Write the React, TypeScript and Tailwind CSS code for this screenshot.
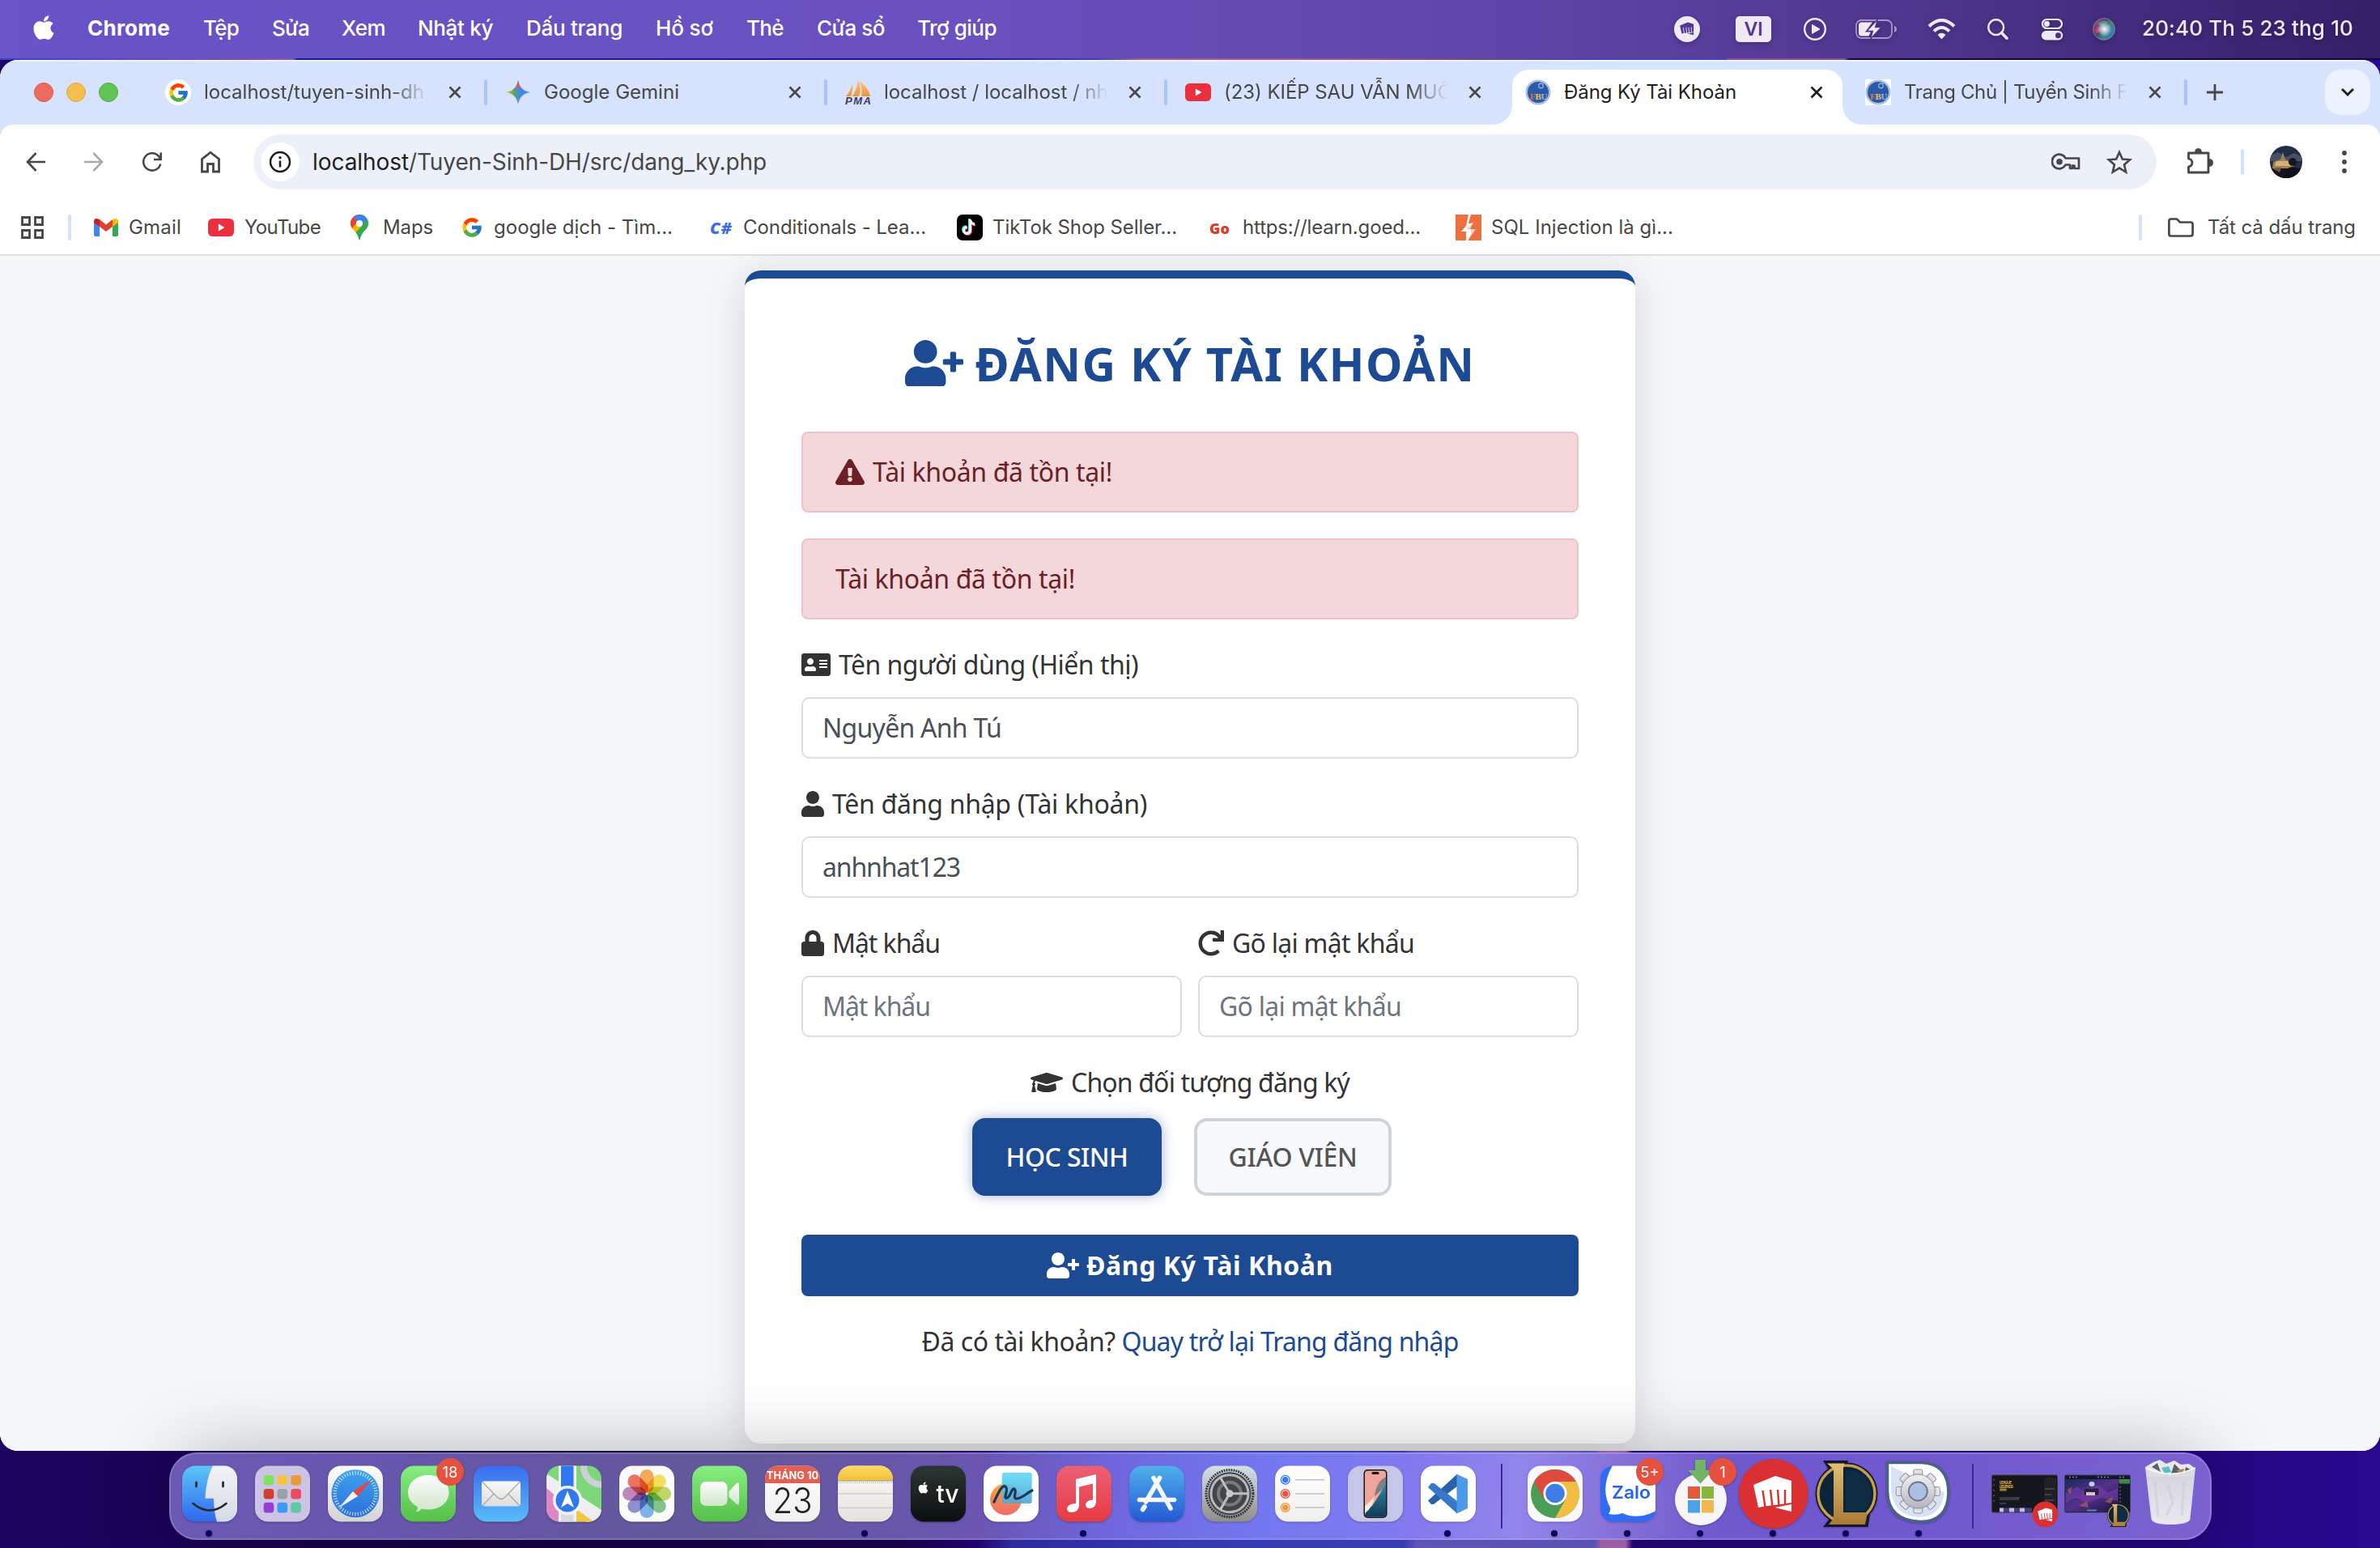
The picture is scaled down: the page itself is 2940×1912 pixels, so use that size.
import { useLayoutEffect, useRef, useState } from "react";
import type { ReactNode } from "react";
import {
  FaAddressCard,
  FaApple,
  FaExclamationTriangle,
  FaGraduationCap,
  FaLock,
  FaRedo,
  FaUser,
  FaUserPlus,
} from "react-icons/fa";
import { FcGoogle } from "react-icons/fc";

/* Text run whose tracking is adjusted so that it fills exactly `w` pixels. */
function Fit({ w, children, className = "" }: { w: number; children: string; className?: string }) {
  const ref = useRef<HTMLSpanElement>(null);
  const [spacing, setSpacing] = useState(0);
  useLayoutEffect(() => {
    if (ref.current) {
      const natural = ref.current.getBoundingClientRect().width;
      setSpacing((w - natural) / children.length);
    }
  }, [w, children]);
  return (
    <span ref={ref} className={`inline-block whitespace-pre ${className}`} style={{ letterSpacing: `${spacing}px` }}>
      {children}
    </span>
  );
}

/* ---------- macOS menu bar ---------- */

const menus = [
  { label: "Chrome", cell: "w-[143px] font-bold", w: 102 },
  { label: "Tệp", cell: "w-[85px] font-medium", w: 44 },
  { label: "Sửa", cell: "w-[86px] font-medium", w: 46 },
  { label: "Xem", cell: "w-[94px] font-medium", w: 54 },
  { label: "Nhật ký", cell: "w-[134px] font-medium", w: 93 },
  { label: "Dấu trang", cell: "w-[160px] font-medium", w: 119 },
  { label: "Hồ sơ", cell: "w-[112px] font-medium", w: 71 },
  { label: "Thẻ", cell: "w-[87px] font-medium", w: 46 },
  { label: "Cửa sổ", cell: "w-[124px] font-medium", w: 84 },
  { label: "Trợ giúp", cell: "w-[120px] font-medium", w: 98 },
];

function Fist({ fill, slit }: { fill: string; slit: string }) {
  return (
    <g>
      <path d="M2 11 L29 0 L49 6 L49 33 L42 34 L36 35 L28 36 L19 37 L8 39 Z" fill={fill} />
      <path d="M28.5 39 L49 35 L49 44 Z" fill={fill} />
      <path d="M13.5 18 L16.5 39 M23 17 L25.5 38 M32 17 L33.5 37 M41 17 L41 35" stroke={slit} strokeWidth="2.4" />
    </g>
  );
}

function MenuBar() {
  return (
    <div className="flex h-[72px] items-center bg-[linear-gradient(90deg,#6853c7_0%,#6951bf_40%,#5f43a5_66%,#4b3287_84%,#33206a_100%)] text-[26px] text-white">
      <FaApple className="mb-1 ml-[37px] h-[34px] w-[34px]" />
      <div className="ml-[37px] flex pb-[3px]">
        {menus.map((m) => (
          <div key={m.label} className={m.cell}>
            <Fit w={m.w}>{m.label}</Fit>
          </div>
        ))}
      </div>
      <div className="ml-auto flex items-center text-[#edeaf4] [filter:drop-shadow(0_2px_3px_rgba(0,0,0,.25))]">
        <svg className="h-8 w-8" viewBox="0 0 32 32">
          <circle cx="16" cy="16" r="16" fill="#edeaf4" />
          <g transform="translate(6.5 7.5) scale(.36)">
            <Fist fill="#54378f" slit="#edeaf4" />
          </g>
        </svg>
        <div className="ml-11 flex h-8 w-11 items-center justify-center rounded-[5px] bg-[#edeaf4] text-[23px] font-semibold text-[#54378f]">VI</div>
        <svg className="ml-10 h-7 w-7" viewBox="0 0 28 28" fill="none">
          <circle cx="14" cy="14" r="12.8" stroke="currentColor" strokeWidth="2.4" />
          <path d="M10.5 8.5 L20 14 L10.5 19.500Z" fill="currentColor" stroke="currentColor" strokeLinejoin="round" />
        </svg>
        <svg className="ml-9 h-[26px] w-[52px]" viewBox="0 0 52 26" fill="none">
          <rect x="1" y="2" width="44" height="22" rx="6.500" stroke="#a596c9" strokeWidth="1.8" />
          <path d="M48 9 Q51 10 51 13 Q51 16 48 17Z" fill="#a596c9" />
          <path d="M8 4.500 H21 L12 16.500 H19 L16.500 21.500 H8 Q4 21.500 4 18 V8 Q4 4.500 8 4.500Z" fill="currentColor" />
          <path d="M27.500 1 L14 15.300 H21.500 L18.500 25 L32 10.600 H24.500Z" fill="currentColor" stroke="#4f348c" strokeWidth="1.200" />
        </svg>
        <svg className="ml-[37px] h-[26px] w-[35px]" viewBox="0 0 35 26" fill="none" stroke="currentColor">
          <path d="M2 9.500 Q17.500 -5.500 33 9.500" strokeWidth="4" />
          <path d="M8 15.500 Q17.500 6.500 27 15.500" strokeWidth="4" />
          <path d="M12.500 20 Q17.500 15.500 22.500 20 L17.500 25.500Z" fill="currentColor" stroke="none" />
        </svg>
        <svg className="ml-[39px] h-[26px] w-[26px]" viewBox="0 0 26 26" fill="none" stroke="currentColor">
          <circle cx="10.700" cy="10.700" r="9.400" strokeWidth="2.400" />
          <path d="M17.500 17.500 L24 24.200" strokeWidth="3.600" strokeLinecap="round" />
        </svg>
        <svg className="ml-10 h-7 w-7" viewBox="0 0 28 28">
          <rect x="2" y="2" width="24" height="11" rx="5.500" fill="none" stroke="currentColor" strokeWidth="2.200" />
          <circle cx="7.500" cy="7.500" r="3.400" fill="currentColor" />
          <rect x="0.800" y="16" width="26.400" height="11.500" rx="5.700" fill="currentColor" />
          <circle cx="21.500" cy="21.700" r="3.500" fill="#4a2f85" />
        </svg>
        <svg className="ml-9 h-7 w-7" viewBox="0 0 28 28">
          <defs>
            <radialGradient id="siriCore"><stop offset="0" stopColor="#fff" /><stop offset=".35" stopColor="#d7e6f5" stopOpacity=".8" /><stop offset="1" stopColor="#fff" stopOpacity="0" /></radialGradient>
            <linearGradient id="siriRing" x1="0" x2="1" y1="0.200" y2="0.800"><stop offset="0" stopColor="#b03a75" /><stop offset=".4" stopColor="#4a4a70" /><stop offset=".6" stopColor="#3c8a80" /><stop offset="1" stopColor="#3a70c8" /></linearGradient>
          </defs>
          <circle cx="14" cy="14" r="13.500" fill="url(#siriRing)" stroke="#8c86a5" strokeWidth=".8" />
          <path d="M6 7 Q12 1 20 5 Q14 8 13 13Z" fill="#4fa58c" opacity=".7" />
          <path d="M3 15 Q7 9 14 14 Q8 18 5 19Z" fill="#e04a70" opacity=".7" />
          <circle cx="14.500" cy="14" r="9" fill="url(#siriCore)" />
        </svg>
        <div className="ml-[33px] mr-[33px] pb-[3px] font-medium">
          <Fit w={261}>20:40 Th 5 23 thg 10</Fit>
        </div>
      </div>
    </div>
  );
}

/* ---------- Site icons ---------- */

function YouTube() {
  return (
    <svg className="h-8 w-8" viewBox="0 0 32 32">
      <rect x="0" y="5" width="32" height="22" rx="5.500" fill="#ec2f3e" />
      <path d="M12.800 11.500 L20.500 16 L12.800 20.500Z" fill="#fff" />
    </svg>
  );
}

function Fbu({ boxed }: { boxed?: boolean }) {
  return (
    <svg className="h-8 w-8" viewBox="0 0 32 32">
      {boxed && <rect width="32" height="32" fill="#fff" />}
      <circle cx="16" cy="16" r="15.500" fill="#a9c0e0" />
      <circle cx="16" cy="16" r="13" fill="#2b5ba8" />
      <circle cx="19.500" cy="8" r="2.800" fill="none" stroke="#9bb8e0" strokeWidth="1.200" />
      <text x="6" y="25" fontFamily="Liberation Serif" fontWeight="700" fontSize="11" fill="#e8694a">F</text>
      <text x="12.500" y="25" fontFamily="Liberation Serif" fontWeight="700" fontSize="11" fill="#efc45a">B</text>
      <text x="19.500" y="25" fontFamily="Liberation Serif" fontWeight="700" fontSize="11" fill="#9fb4d6">U</text>
    </svg>
  );
}

function Gemini() {
  return (
    <svg className="h-8 w-8" viewBox="0 0 32 32">
      <defs>
        <linearGradient id="gemA" x1="0" x2="1" y1=".5" y2=".5"><stop offset="0" stopColor="#f2c32e" /><stop offset=".35" stopColor="#57a66a" /><stop offset=".6" stopColor="#4285f4" /><stop offset="1" stopColor="#4f8ff7" /></linearGradient>
        <linearGradient id="gemB" x1="0" x2="0" y1="0" y2="1"><stop offset="0" stopColor="#ef4a45" /><stop offset=".25" stopColor="#e2565a" stopOpacity=".85" /><stop offset=".45" stopColor="#4285f4" stopOpacity="0" /></linearGradient>
      </defs>
      <path id="gemStar" d="M16 1 Q18 14 31 16 Q18 18 16 31 Q14 18 1 16 Q14 14 16 1Z" fill="url(#gemA)" />
      <path d="M16 1 Q18 14 31 16 Q18 18 16 31 Q14 18 1 16 Q14 14 16 1Z" fill="url(#gemB)" />
    </svg>
  );
}

function Pma() {
  return (
    <svg className="h-8 w-8 overflow-visible" viewBox="0 0 32 32">
      <defs><linearGradient id="pmaSail" x1="0" x2="0" y1="0" y2="1"><stop offset="0" stopColor="#f9c98a" /><stop offset="1" stopColor="#ef9330" /></linearGradient></defs>
      <path d="M9 5 Q10 14 7 21 H1 Q7 14 9 5Z M16 0 Q21 12 17 21 H9 Q15 12 16 0Z M18 3 Q29 10 31 21 H20 Q22 12 18 3Z" fill="url(#pmaSail)" />
      <text x="0" y="31" fontFamily="Liberation Sans" fontStyle="italic" fontWeight="700" fontSize="13" textLength="32" fill="#3c3a5c">PMA</text>
    </svg>
  );
}

function Gmail() {
  return (
    <svg className="h-[22px] w-[30px]" viewBox="0 0 30 22">
      <path d="M0 4 V20 Q0 22 2 22 H7 V10Z" fill="#4285f4" />
      <path d="M30 4 V20 Q30 22 28 22 H23 V10Z" fill="#34a853" />
      <path d="M7 1 L15 7.500 L23 1 V10 L15 16 L7 10Z" fill="#e2402f" />
      <path d="M0 4 Q0 0 3 0 Q5 0 7 1.200 V10 L0 5Z" fill="#c5221f" />
      <path d="M30 4 Q30 0 27 0 Q25 0 23 1.200 V10 L30 5Z" fill="#fbbc04" />
    </svg>
  );
}

function MapsPin() {
  return (
    <svg className="h-8 w-[22px]" viewBox="0 0 22 32">
      <defs><clipPath id="pinClip"><path d="M11 0 A11 11 0 0 1 22 11 Q22 16 17 20 Q13 24 11 32 Q9 24 5 20 Q0 16 0 11 A11 11 0 0 1 11 0Z" /></clipPath></defs>
      <g clipPath="url(#pinClip)">
        <rect width="22" height="32" fill="#34a853" />
        <path d="M0 8 L4 4 L18 20 L8 24 L0 18Z" fill="#fbbc04" />
        <path d="M0 20 L14 4 L9 0 L0 4Z" fill="#ea4335" />
        <path d="M4 2 L22 -2 V6 L11 14Z" fill="#3f7ff0" />
        <path d="M22 5 L12 16 L4 24 L12 36 L24 24Z" fill="#34a853" />
        <path d="M0 19 L8 10 L13 15 L4 24Z" fill="#fbbc04" />
      </g>
      <circle cx="11" cy="11" r="4" fill="#fff" />
    </svg>
  );
}

/* ---------- Browser chrome ---------- */

function Cross({ active }: { active?: boolean }) {
  return (
    <svg className={active ? "h-4 w-4 text-[#1f1f1f]" : "h-4 w-4 text-[#474747]"} viewBox="0 0 16 16">
      <path d="M1.500 1.500 L14.500 14.500 M14.500 1.500 L1.500 14.500" stroke="currentColor" strokeWidth="2.600" />
    </svg>
  );
}

type TabData = { title: string; w: number; icon: ReactNode; active?: boolean; fade?: boolean; sep?: boolean };

const tabs: TabData[] = [
  { title: "localhost/tuyen-sinh-dh", w: 272, fade: true, sep: true, icon: <div className="flex h-8 w-8 items-center justify-center rounded-full bg-white"><FcGoogle className="h-[27px] w-[27px]" /></div> },
  { title: "Google Gemini", w: 167, sep: true, icon: <Gemini /> },
  { title: "localhost / localhost / nha", w: 290, fade: true, sep: true, icon: <Pma /> },
  { title: "(23) KIẾP SAU VẪN MUỐN", w: 300, fade: true, icon: <YouTube /> },
  { title: "Đăng Ký Tài Khoản", w: 213, active: true, icon: <Fbu /> },
  { title: "Trang Chủ | Tuyển Sinh FB", w: 292, fade: true, sep: true, icon: <Fbu boxed /> },
];

function Tab({ t }: { t: TabData }) {
  const body = (
    <>
      {t.icon}
      <div className={t.fade ? "ml-4 w-[280px] overflow-hidden [mask-image:linear-gradient(90deg,#000_82%,transparent_99%)]" : "ml-4 w-[280px] overflow-hidden"}>
        <Fit w={t.w}>{t.title}</Fit>
      </div>
      <div className="ml-auto"><Cross active={t.active} /></div>
    </>
  );
  if (t.active) {
    return (
      <div className="relative mx-[6px] flex h-[68px] w-[408px] items-center rounded-t-[20px] bg-white pb-3 pl-4 pr-6 text-[#1f1f1f]">
        <svg className="absolute -left-6 bottom-0 h-6 w-6" viewBox="0 0 24 24"><path d="M24 0 V24 H0 A24 24 0 0 0 24 0Z" fill="#fff" /></svg>
        {body}
        <svg className="absolute -right-6 bottom-0 h-6 w-6" viewBox="0 0 24 24"><path d="M0 0 V24 H24 A24 24 0 0 1 0 0Z" fill="#fff" /></svg>
      </div>
    );
  }
  return (
    <div className="flex h-[68px] w-[420px] items-center pb-3 pl-[22px] text-[#474747]">
      {body}
      <div className={t.sep ? "ml-7 h-8 w-1 rounded-full bg-[#a8c4f8]" : "ml-7 h-8 w-1"} />
    </div>
  );
}

function TabStrip() {
  return (
    <div className="flex h-20 items-start border-t-2 border-[#eef3fd] bg-[#d7e2fc] pt-[10px] text-[24px]">
      <div className="flex h-14 w-[182px] items-center gap-4 pl-[42px]">
        <div className="h-6 w-6 rounded-full border border-[#d8594d] bg-[#ec6a5e]" />
        <div className="h-6 w-6 rounded-full border border-[#dda73c] bg-[#f5bf4f]" />
        <div className="h-6 w-6 rounded-full border border-[#50ad3f] bg-[#61c554]" />
      </div>
      {tabs.map((t) => <Tab key={t.title} t={t} />)}
      <svg className="ml-[24px] mt-[18px] h-5 w-5" viewBox="0 0 20 20"><path d="M10 0 V20 M0 10 H20" stroke="#474747" strokeWidth="2.800" /></svg>
      <div className="ml-auto mr-3 flex h-14 w-14 items-center justify-center rounded-[20px] bg-[#edf3fe]">
        <svg className="h-4 w-4" viewBox="0 0 16 16"><path d="M1 4 L8 11 L15 4" fill="none" stroke="#1f1f1f" strokeWidth="3" /></svg>
      </div>
    </div>
  );
}

function Toolbar() {
  return (
    <div className="flex h-[92px] items-center text-[#474747]">
      <svg className="ml-8 h-6 w-6" viewBox="0 0 24 24" fill="none" stroke="#474747" strokeWidth="2.600"><path d="M12.500 1 L2 12 L12.500 23 M2 12 H24" /></svg>
      <svg className="ml-12 h-6 w-6" viewBox="0 0 24 24" fill="none" stroke="#a9a9a9" strokeWidth="2.600"><path d="M11.500 1 L22 12 L11.500 23 M22 12 H0" /></svg>
      <svg className="ml-12 h-6 w-6" viewBox="0 0 24 24" fill="none" stroke="#474747" strokeWidth="2.600"><path d="M22.300 14.500 A10.700 10.700 0 1 1 20.500 5.500 L22 8.500 M22.700 0.500 V9 H14" /></svg>
      <svg className="ml-12 h-7 w-6" viewBox="0 0 24 28" fill="none" stroke="#474747" strokeWidth="2.800"><path d="M1.500 10.500 L12 2.200 L22.500 10.500 V26 H15.500 V16.500 H8.500 V26 H1.500Z" /></svg>
      <div className="ml-[41px] flex h-[68px] w-[2351px] items-center rounded-full bg-[#ecf1f9] pl-[9px] text-[28px]">
        <div className="flex h-12 w-12 items-center justify-center rounded-full bg-white">
          <svg className="h-7 w-7" viewBox="0 0 28 28" fill="none"><circle cx="14" cy="14" r="12" stroke="#1f1f1f" strokeWidth="2.500" /><path d="M14 12.500 V20.500" stroke="#1f1f1f" strokeWidth="2.600" /><circle cx="14" cy="8.700" r="1.700" fill="#1f1f1f" /></svg>
        </div>
        <div className="ml-4 flex">
          <Fit w={119} className="text-[#1f1f1f]">localhost</Fit>
          <Fit w={442}>/Tuyen-Sinh-DH/src/dang_ky.php</Fit>
        </div>
        <svg className="ml-auto h-6 w-9" viewBox="0 0 36 24" fill="none" stroke="#474747" strokeWidth="2.700">
          <path d="M17.500 7.500 A8.800 8.800 0 1 0 17.500 15.500 H23 V20 H26 V16.500 H28.500 V20 H34 V7.500Z" strokeLinejoin="round" />
          <circle cx="10" cy="11.700" r="3.800" fill="#474747" stroke="none" />
        </svg>
        <svg className="ml-8 mr-[30px] h-[30px] w-[32px]" viewBox="0 0 32 30" fill="none" stroke="#474747" strokeWidth="2.600"><path d="M16 3 L19.800 11.600 L29 12.300 L22 18.400 L24.200 27.500 L16 22.600 L7.800 27.500 L10 18.400 L3 12.300 L12.200 11.600Z" /></svg>
      </div>
      <svg className="mb-1 ml-9 h-9 w-9" viewBox="0 0 36 36" fill="none" stroke="#474747" strokeWidth="2.800">
        <path d="M3.500 9 H28 V33 H3.500 V26 Q8 25 8 21 Q8 17 3.500 16Z" strokeLinejoin="round" />
        <path d="M11 9 Q11 3 15.500 3 Q20 3 20 9Z M28 16 Q34 16 34 21 Q34 26 28 26Z" fill="#474747" stroke="none" />
      </svg>
      <div className="ml-[32px] h-8 w-1 rounded-full bg-[#d3e1fb]" />
      <svg className="ml-8 h-10 w-10" viewBox="0 0 40 40">
        <defs><clipPath id="avatarClip"><circle cx="20" cy="20" r="20" /></clipPath></defs>
        <g clipPath="url(#avatarClip)">
          <rect width="40" height="40" fill="#222c44" />
          <path d="M0 12 L10 8 L20 14 L30 9 L40 14 V19 H0Z" fill="#465068" />
          <path d="M4 20 L13 17 L16 8 L19 17 L28 21 L30 28 H3Z" fill="#a38156" />
          <path d="M8 19 L22 19 L26 25 H6Z" fill="#d5b27a" />
          <rect y="28" width="40" height="12" fill="#15131c" />
          <circle cx="28" cy="20" r="5" fill="#17181f" />
          <path d="M16 40 Q18 27 28 26 Q38 27 40 40Z" fill="#10121b" />
          <path d="M3 28 L14 27 L12 33 Z" fill="#6d5844" />
        </g>
      </svg>
      <svg className="ml-[49px] h-7 w-[6px]" viewBox="0 0 6 28" fill="#474747"><circle cx="3" cy="3" r="2.900" /><circle cx="3" cy="14" r="2.900" /><circle cx="3" cy="25" r="2.900" /></svg>
    </div>
  );
}

const bookmarks = [
  { label: "Gmail", w: 65, cell: "ml-[28px] w-[141px]", box: "w-[43px]", icon: <Gmail /> },
  { label: "YouTube", w: 94, cell: "w-[176px]", box: "w-[45px]", icon: <YouTube /> },
  { label: "Maps", w: 62, cell: "w-[138px]", box: "w-[40px]", icon: <MapsPin /> },
  { label: "google dịch - Tìm...", w: 221, cell: "w-[306px]", box: "w-[39px]", icon: <FcGoogle className="-ml-[2px] h-[28px] w-[28px]" /> },
  { label: "Conditionals - Lea...", w: 226, cell: "w-[305px]", box: "w-[41px]", icon: <span className="font-['Open_Sans'] text-[20px] font-extrabold italic text-[#3a6cf0]"><Fit w={28}>C#</Fit></span> },
  { label: "TikTok Shop Seller...", w: 228, cell: "w-[312px]", box: "w-[44px]", icon: (
    <svg className="h-8 w-8" viewBox="0 0 32 32" fill="none" strokeWidth="3">
      <rect width="32" height="32" rx="7" fill="#000" />
      <path d="M16.500 6 V19.500 A4 4 0 1 1 12.500 15.500 M16.500 7 Q17.500 11.500 22 12" stroke="#25f4ee" transform="translate(-1 -1)" />
      <path d="M16.500 6 V19.500 A4 4 0 1 1 12.500 15.500 M16.500 7 Q17.500 11.500 22 12" stroke="#fe2c55" transform="translate(1 1)" />
      <path d="M16.500 6 V19.500 A4 4 0 1 1 12.500 15.500 M16.500 7 Q17.500 11.500 22 12" stroke="#fff" />
    </svg>
  ) },
  { label: "https://learn.goed...", w: 220, cell: "w-[304px]", box: "w-[41px]", icon: <span className="font-['Open_Sans'] text-[18px] font-extrabold text-[#dd3b2a]"><Fit w={25}>Go</Fit></span> },
  { label: "SQL Injection là gì...", w: 225, cell: "w-[300px]", box: "w-[44px]", icon: (
    <svg className="h-8 w-8" viewBox="0 0 32 32">
      <rect width="32" height="32" fill="#ee7040" />
      <path d="M16 0 H19 L16 11 H22 L14 16 V18 H19 V24 L15.500 32 H13 V21 H7 L13 14Z" fill="#fff" />
      <path d="M13 15 L22 9 L18 18 H25 L15 32 L17 22 H13Z" fill="#fff" opacity=".7" />
    </svg>
  ) },
];

function BookmarkBar() {
  return (
    <div className="flex h-[68px] items-center border-b-2 border-[#dfe3df] pl-[26px] text-[24px] text-[#474747]">
      <svg className="h-7 w-7" viewBox="0 0 28 28" fill="none" stroke="#474747" strokeWidth="2.800"><path d="M1.500 1.500 H10.500 V10.500 H1.500Z M17.500 1.500 H26.500 V10.500 H17.500Z M1.500 17.500 H10.500 V26.500 H1.500Z M17.500 17.500 H26.500 V26.500 H17.500Z" /></svg>
      <div className="ml-[30px] h-8 w-1 rounded-full bg-[#d3e1fb]" />
      {bookmarks.map((b) => (
        <div key={b.label} className={`flex items-center ${b.cell}`}>
          <div className={b.box}>{b.icon}</div>
          <Fit w={b.w}>{b.label}</Fit>
        </div>
      ))}
      <div className="ml-auto h-8 w-1 rounded-full bg-[#d3e1fb]" />
      <svg className="ml-8 h-6 w-8" viewBox="0 0 32 24" fill="none" stroke="#474747" strokeWidth="2.700"><path d="M1.400 20 V4 Q1.400 1.500 4 1.500 H11 L15 5.500 H28 Q30.600 5.500 30.600 8 V20 Q30.600 22.500 28 22.500 H4 Q1.400 22.500 1.400 20Z" /></svg>
      <div className="ml-[17px] mr-[30px]"><Fit w={183}>Tất cả dấu trang</Fit></div>
    </div>
  );
}

/* ---------- Registration form ---------- */

function Alert({ icon }: { icon?: boolean }) {
  return (
    <div className="mb-8 flex h-[100px] items-center rounded-[8px] border-2 border-[#efc2c9] bg-[#f3d7da] pl-10 text-[#6b2026]">
      {icon && <FaExclamationTriangle className="mr-[10px] h-8 w-9" />}
      <Fit w={296}>Tài khoản đã tồn tại!</Fit>
    </div>
  );
}

function Field({ icon, label, lw, text, tw, muted }: { icon: ReactNode; label: string; lw: number; text: string; tw: number; muted?: boolean }) {
  return (
    <div className="mb-8 flex-1">
      <div className="mb-4 flex h-12 items-center">
        {icon}
        <Fit w={lw} className="ml-[10px]">{label}</Fit>
      </div>
      <div className={muted ? "flex h-[76px] items-center rounded-[10px] border-2 border-[#dddddd] bg-white pl-6 text-[#6c757d]" : "flex h-[76px] items-center rounded-[10px] border-2 border-[#dddddd] bg-white pl-6 text-[#495057]"}>
        <Fit w={tw}>{text}</Fit>
      </div>
    </div>
  );
}

function FormCard() {
  return (
    <div className="mx-auto mt-[18px] h-[1449px] w-[1100px] rounded-[20px] border-t-[10px] border-[#1d4b93] bg-white px-[70px] pt-[70px] font-['Noto_Sans',sans-serif] text-[32px] leading-[48px] text-[#333] shadow-[0_8px_50px_rgba(0,0,0,0.13)]">
      <div className="mb-[50px] flex h-[69px] items-center justify-center text-[57.600px] font-bold leading-[69px] text-[#1d4b93]">
        <FaUserPlus className="mr-[15px] h-[1em] w-[1.25em]" />
        <Fit w={618}>ĐĂNG KÝ TÀI KHOẢN</Fit>
      </div>
      <Alert icon />
      <Alert />
      <Field icon={<FaAddressCard className="h-8 w-9" />} label="Tên người dùng (Hiển thị)" lw={370} text="Nguyễn Anh Tú" tw={221} />
      <Field icon={<FaUser className="h-8 w-7" />} label="Tên đăng nhập (Tài khoản)" lw={389} text="anhnhat123" tw={170} />
      <div className="flex gap-5">
        <Field icon={<FaLock className="h-8 w-7" />} label="Mật khẩu" lw={133} text="Mật khẩu" tw={133} muted />
        <Field icon={<FaRedo className="h-8 w-8" />} label="Gõ lại mật khẩu" lw={225} text="Gõ lại mật khẩu" tw={225} muted />
      </div>
      <div className="mb-5 flex h-12 items-center justify-center">
        <FaGraduationCap className="mr-[10px] h-8 w-10" />
        <Fit w={344}>Chọn đối tượng đăng ký</Fit>
      </div>
      <div className="ml-[211px] flex gap-10">
        <div className="flex h-24 w-[234px] items-center justify-center rounded-2xl bg-[#1d4b93] font-medium text-white shadow-[0_0_16px_rgba(29,75,147,0.4)]">
          <Fit w={151}>HỌC SINH</Fit>
        </div>
        <div className="flex h-24 w-[244px] items-center justify-center rounded-2xl border-4 border-[#ced4da] bg-[#f8f9fc] font-medium text-[#555]">
          <Fit w={159}>GIÁO VIÊN</Fit>
        </div>
      </div>
      <div className="mt-12 flex h-[76px] items-center justify-center rounded-[8px] bg-[#1d4b93] font-bold text-white">
        <FaUserPlus className="mr-[9px] h-8 w-10" />
        <Fit w={305}>Đăng Ký Tài Khoản</Fit>
      </div>
      <div className="mt-8 flex justify-center">
        <Fit w={247}>Đã có tài khoản? </Fit>
        <Fit w={416} className="text-[#1d4b93]">Quay trở lại Trang đăng nhập</Fit>
      </div>
    </div>
  );
}

/* ---------- Dock ---------- */

function Tile({ fill }: { fill: string }) {
  return <rect x="11" y="16.500" width="68" height="69" rx="16" fill={fill} />;
}

function Grad({ id, from, to }: { id: string; from: string; to: string }) {
  return <linearGradient id={id} x1="0" y1="0" x2="0" y2="1"><stop offset="0" stopColor={from} /><stop offset="1" stopColor={to} /></linearGradient>;
}

function Badge({ text }: { text: string }) {
  return (
    <g>
      <circle cx="72" cy="24" r="17" fill="#e5503f" />
      <text x="72" y="30.500" textAnchor="middle" fontFamily="Inter" fontSize="18.500" fill="#fff">{text}</text>
    </g>
  );
}

function LolEmblem() {
  return (
    <g>
      <circle cx="45" cy="51" r="38.500" fill="#15172e" />
      <path d="M16 10 H47 L44.500 18 V70 H75 L71.500 92 H16 L23 83 V21Z" fill="#15172e" />
      <circle cx="45" cy="51" r="35" fill="#0c2438" stroke="#c89f4d" strokeWidth="3.400" />
      <path d="M44 22 A29 29 0 0 1 66 72 H44Z" fill="#0e2c42" />
      <path d="M21 13.500 H42.500 L41 19 V74 H71 L68 89 H23 L29 81 V21Z" fill="url(#gold)" />
    </g>
  );
}

function GearShape({ teeth, r, tooth, fill, stroke }: { teeth: number; r: number; tooth: number; fill: string; stroke: string }) {
  const angles = Array.from({ length: teeth }, (_, i) => (360 / teeth) * i);
  return (
    <g fill={fill} stroke={stroke} strokeWidth="1">
      {angles.map((a) => <rect key={a} x={-tooth / 2} y={-r - 6} width={tooth} height="12" rx="2" transform={`rotate(${a})`} />)}
      <circle r={r} />
    </g>
  );
}

const ticks = Array.from({ length: 48 }, (_, i) => i * 7.5);
const petals = [
  [0, "#f3a03c"], [45, "#f5dd3c"], [90, "#b9d24f"], [135, "#6dbd7c"],
  [180, "#66a8e8"], [225, "#7f7cc8"], [270, "#b875b5"], [315, "#ee5b4a"],
] as const;
const pads = [
  ["#7ee35f", "#f5c542", "#eb9a3a"], ["#d23b2f", "#9aa0a6", "#ec4a63"], ["#9440d6", "#3c9af5", "#5fc9a6"],
];

const dockApps: { name: string; dot?: boolean; art: ReactNode }[] = [
  { name: "Finder", dot: true, art: (
    <>
      <defs><Grad id="finder" from="#5cc6f8" to="#3068ee" /><Grad id="finderR" from="#f3f4f6" to="#d4dae6" /><clipPath id="tileClip"><rect x="11" y="16.500" width="68" height="69" rx="16" /></clipPath></defs>
      <Tile fill="url(#finder)" />
      <path clipPath="url(#tileClip)" d="M49 16 Q40 35 39.500 56.700 H50 Q50 72 54 86 H80 V16Z" fill="url(#finderR)" />
      <path d="M28.500 37 V42 M61.500 37 V42" stroke="#2a2f3a" strokeWidth="2.800" strokeLinecap="round" />
      <path d="M24.500 63 Q45 80 65.500 63" fill="none" stroke="#22262e" strokeWidth="2.600" strokeLinecap="round" />
    </>
  ) },
  { name: "Launchpad", art: (
    <>
      <Tile fill="#cbc5e3" />
      {pads.map((row, y) => row.map((c, x) => <rect key={c} x={21.700 + x * 16.800} y={28 + y * 16.900} width="12.600" height="12.600" rx="3.500" fill={c} />))}
    </>
  ) },
  { name: "Safari", art: (
    <>
      <defs><Grad id="safT" from="#fdfdfd" to="#d3d3d5" /><Grad id="saf" from="#3fa3ee" to="#2a6fdc" /></defs>
      <Tile fill="url(#safT)" />
      <circle cx="45" cy="50.700" r="29.500" fill="url(#saf)" />
      <g stroke="#fff" strokeWidth="1" opacity=".85">{ticks.map((a) => <path key={a} d="M45 23 V27.500" transform={`rotate(${a} 45 50.700)`} />)}</g>
      <path d="M66 33 L42 48 L48 54Z" fill="#e8453c" /><path d="M24.500 68.500 L42 48 L48 54Z" fill="#f4f4f6" />
    </>
  ) },
  { name: "Messages", art: (
    <>
      <defs><Grad id="green" from="#87ee82" to="#55bf48" /><Grad id="bub" from="#fdfdfd" to="#cfe6c8" /></defs>
      <Tile fill="url(#green)" />
      <path d="M45 28 C60 28 70.500 37.500 70.500 49.500 S60 70.500 45 70.500 Q41 70.500 37 69.500 Q34 73 29.500 73.500 Q32.500 70 31.500 67 Q20 61 20 49.500 C20 37.500 30 28 45 28Z" fill="url(#bub)" />
      <Badge text="18" />
    </>
  ) },
  { name: "Mail", art: (
    <>
      <defs><Grad id="mail" from="#3a6cee" to="#57bdf8" /><Grad id="env" from="#fafafa" to="#dcdcde" /></defs>
      <Tile fill="url(#mail)" />
      <rect x="21" y="35.500" width="48" height="31" rx="3" fill="url(#env)" />
      <path d="M22 66 L36 51 M68 66 L54 51 M22 36.500 L40 55 Q45 60 50 55 L68 36.500" fill="none" stroke="#a9a9ad" strokeWidth="1.300" />
    </>
  ) },
  { name: "Maps", art: (
    <g clipPath="url(#tileClip)">
      <rect x="11" y="16" width="68" height="70" fill="#7ed67a" />
      <path d="M11 42 L27 52 V86 H11Z" fill="#df86c6" />
      <path d="M11 26 L80 72 V86 H60 L11 44Z" fill="#ededf2" />
      <path d="M48 86 V70 L70 86Z" fill="#f3c545" />
      <circle cx="80" cy="17" r="23" fill="none" stroke="#cfcfd8" strokeWidth="8" />
      <rect x="26" y="16" width="22" height="70" fill="#f3f3f7" />
      <rect x="29" y="16" width="15.500" height="40" fill="#2f78ee" />
      <rect x="29" y="70" width="15.500" height="16" fill="#d9d9e0" />
      <circle cx="37" cy="59" r="18" fill="#f4f4f8" /><circle cx="37" cy="59" r="14.500" fill="#2f78ee" />
      <path d="M37 47.500 L45 68 L37 63 L29 68Z" fill="#fff" />
    </g>
  ) },
  { name: "Photos", art: (
    <>
      <Tile fill="#fbfbfc" />
      {petals.map(([a, c]) => <rect key={a} x="36.500" y="21" width="17" height="29" rx="8.500" fill={c} opacity=".85" className="mix-blend-multiply" transform={`rotate(${a} 45 51)`} />)}
    </>
  ) },
  { name: "FaceTime", art: (
    <>
      <Tile fill="url(#green)" />
      <rect x="21" y="36" width="33.500" height="30" rx="7" fill="url(#bub)" />
      <path d="M56.500 48 L66 38 Q69 36 69 40 V62 Q69 66 66 64 L56.500 55Z" fill="url(#bub)" />
    </>
  ) },
  { name: "Calendar", art: (
    <>
      <defs><Grad id="cal" from="#ffffff" to="#efefee" /></defs>
      <Tile fill="url(#cal)" />
      <path clipPath="url(#tileClip)" d="M10 16 H80 V38 H10Z" fill="#e25f52" />
      <text x="45" y="33" textAnchor="middle" textLength="64" lengthAdjust="spacingAndGlyphs" fontFamily="Inter" fontWeight="700" fontSize="13.500" fill="#fff">THÁNG 10</text>
      <text x="45" y="75" textAnchor="middle" textLength="49" lengthAdjust="spacingAndGlyphs" fontFamily="Inter" fontWeight="300" fontSize="43" fill="#222">23</text>
    </>
  ) },
  { name: "Notes", dot: true, art: (
    <>
      <defs><Grad id="notes" from="#fbfaf8" to="#e3e2dc" /><Grad id="notesY" from="#fbdc66" to="#f3bf35" /></defs>
      <Tile fill="url(#notes)" />
      <path clipPath="url(#tileClip)" d="M10 16 H80 V34.500 H10Z" fill="url(#notesY)" />
      <path d="M11 35 H79" stroke="#8e8a80" strokeWidth="1" /><path d="M12 37.500 H79" stroke="#a8a69e" strokeWidth="1" strokeDasharray="1 1.500" />
      <path d="M11 51 H79 M11 68.500 H79" stroke="#cfced2" strokeWidth="1.300" />
    </>
  ) },
  { name: "TV", art: (
    <>
      <defs><Grad id="tv" from="#2c3733" to="#0b0e10" /></defs>
      <Tile fill="url(#tv)" />
      <FaApple x="18.500" y="35.500" width="25" height="27" color="#fff" />
      <text x="42.500" y="61.500" textLength="28" lengthAdjust="spacingAndGlyphs" fontFamily="Inter" fontWeight="500" fontSize="30" fill="#fff">tv</text>
    </>
  ) },
  { name: "Freeform", art: (
    <>
      <defs><Grad id="ffO" from="#f6a63a" to="#ef6a6c" /><Grad id="ffB" from="#62dbf8" to="#55a5d6" /></defs>
      <Tile fill="#fff" />
      <circle cx="38.500" cy="58" r="19.500" fill="url(#ffO)" /><rect x="33.700" y="25" width="37" height="38" rx="2.500" fill="url(#ffB)" opacity=".92" />
      <path d="M24 61 C30 48 34 40 38 42 C43 45 34 58 40 56 C45 54 45 44 49 45 C53 47 46 57 52 57 C60 56 64 50 71 47" fill="none" stroke="#16395c" strokeWidth="3.200" strokeLinecap="round" />
    </>
  ) },
  { name: "Music", dot: true, art: (
    <>
      <defs><Grad id="music" from="#ec6075" to="#e63b42" /></defs>
      <Tile fill="url(#music)" />
      <path d="M35 33 L60 27 V61 Q59 69 52 69 Q47 69 47 64 Q48 59 56 58.500 V38.500 L39 42.500 V66 Q38 73.500 30 74 Q24 74 24 69 Q25 63.500 35 63Z" fill="#fff" />
    </>
  ) },
  { name: "App Store", art: (
    <>
      <defs><Grad id="store" from="#4fb0ea" to="#2458d4" /></defs>
      <Tile fill="url(#store)" />
      <path d="M48.500 31.500 L31.500 61 M41 31.500 L62 69 M23.500 58.500 H66.500 M30 67 L27.500 70.500" stroke="#f5f7fb" strokeWidth="5.600" strokeLinecap="round" />
    </>
  ) },
  { name: "Settings", art: (
    <>
      <defs><Grad id="setT" from="#d4dfe9" to="#8f8d8a" /></defs>
      <Tile fill="url(#setT)" />
      <circle cx="45" cy="50.700" r="29" fill="none" stroke="#2e2f31" strokeWidth="3" strokeDasharray="1.800 1.200" />
      <circle cx="45" cy="50.700" r="26.500" fill="#434548" /><circle cx="45" cy="50.700" r="23" fill="none" stroke="#b7b8ba" strokeWidth="3" />
      <circle cx="45" cy="50.700" r="14" fill="none" stroke="#77797c" strokeWidth="4" />
      <path d="M45 50.700 H68 M45 50.700 L33.500 31 M45 50.700 L33.500 70.500" stroke="#bfc0c2" strokeWidth="3" /><circle cx="45" cy="50.700" r="4.500" fill="#c9cacc" />
    </>
  ) },
  { name: "Reminders", art: (
    <>
      <Tile fill="url(#cal)" />
      {[["#3478f6", 33.700], ["#e8503a", 51], ["#ee9a36", 68]].map(([c, y]) => (
        <g key={y}><circle cx="23.700" cy={y} r="5.400" fill="none" stroke={c as string} strokeWidth="1.300" /><circle cx="23.700" cy={y} r="3.700" fill={c as string} /><path d={`M36 ${y} H72`} stroke="#c1c1c4" strokeWidth="1.500" /></g>
      ))}
    </>
  ) },
  { name: "iPhone", art: (
    <>
      <defs><Grad id="ph" from="#2f8ba5" to="#123a5a" /></defs>
      <Tile fill="#c6c6e8" />
      <rect x="30.500" y="21" width="29" height="60" rx="5" fill="#16171c" />
      <rect x="32" y="22.500" width="26" height="57" rx="4" fill="#f0a49b" />
      <path d="M58 30 Q46 36 44 54 L58 42Z" fill="#7d8086" /><path d="M32 79 Q33 70 41 66 Q52 50 58 38 V76 Q58 79.500 54 79.500 H36 Q32 79.500 32 76Z" fill="url(#ph)" />
      <path d="M32 75 Q42 68 44 54 Q38 62 32 66Z" fill="#f4e9e0" />
      <rect x="40.500" y="24" width="9" height="3" rx="1.500" fill="#111" />
    </>
  ) },
  { name: "VS Code", dot: true, art: (
    <>
      <Tile fill="#fff" />
      <path d="M56 26.700 L20 59.500 L24 64 L27 64 L56.500 41.500Z" fill="#2862a8" />
      <path d="M56 75.500 L20 43 L24 38 L27.500 38 L56.500 60.500Z" fill="#3579c8" />
      <path d="M55.500 26.700 L69 33 V69 L55.500 75.500Z" fill="#4c9bea" />
    </>
  ) },
];

const dockRecent: { name: string; dot?: boolean; art: ReactNode }[] = [
  { name: "Chrome", dot: true, art: (
    <>
      <Tile fill="#f9f8fd" />
      <circle cx="45" cy="51" r="30" fill="#4a9d52" />
      <path d="M45 51 L19 36 A30 30 0 0 1 71 36Z" fill="#dc4b3c" />
      <path d="M45 36 H71 A30 30 0 0 1 45 81 L58 58Z" fill="#f3bd42" />
      <path d="M19 36 L32 58.500 L40 40Z" fill="#dc4b3c" />
      <circle cx="45" cy="50.500" r="14.500" fill="#fff" /><circle cx="45" cy="50.500" r="11.800" fill="#3f7de6" />
    </>
  ) },
  { name: "Zalo", dot: true, art: (
    <>
      <Tile fill="#2f6bf5" />
      <path clipPath="url(#tileClip)" d="M26 16 H80 V72 Q58 84 38 75 Q31 78 21 76 Q24 72 23 68 Q10 44 26 16Z" fill="#fff" />
      <text x="25" y="56.500" textLength="48" lengthAdjust="spacingAndGlyphs" fontFamily="Inter" fontWeight="600" fontSize="22" fill="#2463eb">Zalo</text>
      <Badge text="5+" />
    </>
  ) },
  { name: "Windows", dot: true, art: (
    <>
      <circle cx="45" cy="58" r="32" fill="#f6f6f8" />
      <path d="M29 42 H44 V57 H29Z" fill="#e05a3b" /><path d="M46 42 H61 V57 H46Z" fill="#8ab53c" />
      <path d="M29 59 H44 V74.500 H29Z" fill="#4ba3e6" /><path d="M46 59 H61 V74.500 H46Z" fill="#f2b64a" />
      <path d="M38 9 H51 V22 H60 L44.500 38.500 L29 22 H38Z" fill="#74b565" />
      <Badge text="1" />
    </>
  ) },
  { name: "Riot", dot: true, art: (
    <>
      <circle cx="44.700" cy="51" r="43" fill="#da2f33" />
      <g transform="translate(18 29)"><Fist fill="#fff" slit="#da2f33" /></g>
    </>
  ) },
  { name: "League", dot: true, art: (
    <>
      <defs><Grad id="gold" from="#e2bd72" to="#a97a35" /></defs>
      <LolEmblem />
    </>
  ) },
  { name: "Automation", dot: true, art: (
    <>
      <defs><Grad id="gear" from="#f0f0f3" to="#b4b4be" /></defs>
      <path d="M5.500 12.500 H47 Q81 13 81 50 Q80 85.500 46 85.500 Q6 84 5.500 48Z" fill="#fff" stroke="#4a6285" strokeWidth="3.600" />
      <path d="M10 17 L76 49 Q72 80 44 80 Q12 78 10 46Z" fill="#c9d8f2" opacity=".75" />
      <g transform="translate(43.300 48)"><GearShape teeth={8} r={21} tooth={11} fill="url(#gear)" stroke="#8e8f9c" /><circle r="11.500" fill="#a9bfe4" stroke="#6f7388" strokeWidth="1.800" /></g>
    </>
  ) },
];

function DockCell({ app }: { app: { name: string; dot?: boolean; art: ReactNode } }) {
  return (
    <svg className="h-[108px] w-[90px] shrink-0 overflow-visible [filter:drop-shadow(0_1px_1px_rgba(0,0,0,.25))]" viewBox="0 0 90 108">
      {app.art}
      {app.dot && <circle cx="44" cy="100" r="4" fill="#0a0258" />}
    </svg>
  );
}

function Divider() {
  return <div className="mx-5 mt-[14px] h-20 w-[2px] shrink-0 bg-[#3d27a0]" />;
}

function Dock() {
  return (
    <div className="relative ml-[209px] mt-[2px] flex h-[108px] w-[2523px] rounded-[34px] bg-[linear-gradient(97deg,#6c59b4_0%,#6656ab_12%,#63589a_27%,#6a56b2_40%,#6f66dc_46%,#7478f0_54%,#8379ee_61%,#9085ea_66%,#8570d8_71%,#6f58cc_76%,#7058cf_86%,#7a63cf_100%)] pl-[5px] shadow-[inset_0_0_0_2px_rgba(255,255,255,0.17),0_0_100px_-20px_rgba(0,0,0,0.43)]">
      {dockApps.map((a) => <DockCell key={a.name} app={a} />)}
      <Divider />
      {dockRecent.map((a) => <DockCell key={a.name} app={a} />)}
      <Divider />
      <svg className="h-[108px] w-[86px] shrink-0 overflow-visible" viewBox="0 0 86 108">
        <rect x="2.500" y="28" width="81" height="46" rx="1.500" fill="#16171d" stroke="#3a3a44" strokeWidth="1" />
        <rect x="67" y="31" width="15" height="42" fill="#202126" />
        <path d="M5 33 V64" stroke="#8a7440" strokeWidth="1.200" strokeDasharray="1.500 5" />
        <text x="12" y="39" fontFamily="Inter" fontWeight="800" fontSize="5" textLength="15" fill="#c49a3c">LEAGUE</text>
        <text x="12" y="43.500" fontFamily="Inter" fontWeight="800" fontSize="5" textLength="17" fill="#c49a3c">LEGENDS</text>
        <rect x="12" y="44.500" width="9" height="3" rx="1.500" fill="#a98430" />
        <path d="M12 56 H37 M12 58 H36 M12 63 H20 M68 45 H80 M68 52 H76 M68 59 H79" stroke="#62626a" strokeWidth="1" />
        <path d="M12 68.500 H17 V73.500 H12Z M24 68.500 H30 V73.500 H24Z M37 68.500 H43 V73.500 H37Z" fill="#c3b8e8" />
        <path d="M17 68.500 H24 V73.500 H17Z M30 68.500 H37 V73.500 H30Z M43 68.500 H52 V73.500 H43Z" fill="#43407a" />
        <circle cx="68.500" cy="76.500" r="16" fill="#da2f33" />
        <g transform="translate(58.500 68.500) scale(.38)"><Fist fill="#fff" slit="#da2f33" /></g>
      </svg>
      <svg className="h-[108px] w-[94px] shrink-0 overflow-visible" viewBox="0 0 94 108">
        <defs><linearGradient id="arena" x1="0" x2="1" y1="0" y2="1"><stop offset="0" stopColor="#1b2a5c" /><stop offset=".5" stopColor="#54308e" /><stop offset="1" stopColor="#1b1440" /></linearGradient></defs>
        <rect x="6.500" y="28" width="81" height="46" rx="1.500" fill="#101829" stroke="#3a3a5a" strokeWidth="1" />
        <rect x="7" y="33" width="66" height="40" fill="url(#arena)" />
        <path d="M8 50 L22 42 L30 48 L48 40 L60 50 L72 44 V60 L52 56 L34 62 L20 56 L8 62Z" fill="#7a3fae" opacity=".55" />
        <path d="M10 46 L16 42 L13 52Z M24 66 L34 60 L36 68Z M56 60 L66 55 L64 64Z" fill="#c06a4a" opacity=".6" />
        <rect x="30" y="44" width="19" height="9" fill="#2a1c50" stroke="#7d4a7a" strokeWidth=".8" /><rect x="33" y="49" width="11" height="4" fill="#d8c8b8" />
        <ellipse cx="40" cy="39" rx="3.500" ry="3" fill="#b5d3e6" />
        <rect x="73.500" y="33" width="13.500" height="5.500" fill="#3e8a3c" /><path d="M75 42 V70" stroke="#9c8a58" strokeWidth="1.200" strokeDasharray="1.500 3" />
        <path d="M12 30.500 H22 M47 30.500 H62 M74 30.500 H80" stroke="#7a7f95" strokeWidth="1.300" strokeDasharray="2 2" />
        <path d="M34 71.500 H46" stroke="#3aa0b4" strokeWidth="1.800" />
        <g transform="translate(56.500 59) scale(.36)"><LolEmblem /></g>
      </svg>
      <svg className="h-[108px] w-[86px] shrink-0 overflow-visible" viewBox="0 0 86 108">
        <defs><Grad id="bin" from="#d9dade" to="#f1f1f2" /></defs>
        <path d="M12 18 L22 12 L30 9 L38 14 L48 10 L56 15 L66 14 L74 20 L70 30 H16Z" fill="#e9e9ec" />
        <path d="M20 18 L27 13 L31 24Z M48 14 L58 24 L44 26Z M62 18 L70 22 L60 28Z" fill="#5b5f66" />
        <path d="M32 19 L41 17 L44 24 L36 26Z" fill="#56c3c8" /><path d="M50 22 L60 20 L58 28Z" fill="#a8896a" />
        <path d="M12 19 Q43 34 74 19 L67.500 82 Q66 89 43 89 Q21 89 19.500 82Z" fill="url(#bin)" opacity=".94" />
        <path d="M12 19 Q43 34 74 19" fill="none" stroke="#f7f7f8" strokeWidth="1.500" />
        <path d="M24 36 L28 80 M60 36 L57 78 M40 40 L46 62 L38 78" stroke="#c6c7cb" strokeWidth="3" fill="none" opacity=".45" />
      </svg>
    </div>
  );
}

export default function App() {
  return (
    <div className="flex h-[1912px] w-[2940px] flex-col overflow-hidden bg-[linear-gradient(90deg,#1c0560_0%,#140244_20%,#1a0356_38%,#28007c_41%,#3430b4_42.5%,#3c42c8_50%,#4046cc_59%,#6a60d0_59.500%,#6660cc_67%,#b46cba_67.300%,#b46cba_68.300%,#22087a_68.600%,#25067e_92%,#2a0890_100%)] font-['Inter',sans-serif]">
      <MenuBar />
      <div className="h-[2px] bg-[linear-gradient(90deg,#3a3fd0_0%,#8a55b0_12.300%,#1b1a96_12.500%,#1a1590_40%,#3444b8_46%,#a8608c_48%,#9a5a90_56%,#6a4a88_62%,#3a48b8_67%,#3a48b8_72.500%,#85529e_72.600%,#85529e_77.500%,#12063c_77.700%,#12063c_100%)]" />
      <div className="h-[1718px] overflow-hidden rounded-[22px] bg-[#d7e2fc]">
        <TabStrip />
        <div className="h-[1638px] rounded-t-[16px] bg-white">
          <Toolbar />
          <div className="h-[2px]" />
          <BookmarkBar />
          <div className="flow-root h-[1476px] bg-[#f4f6f9]">
            <FormCard />
          </div>
        </div>
      </div>
      <Dock />
    </div>
  );
}
